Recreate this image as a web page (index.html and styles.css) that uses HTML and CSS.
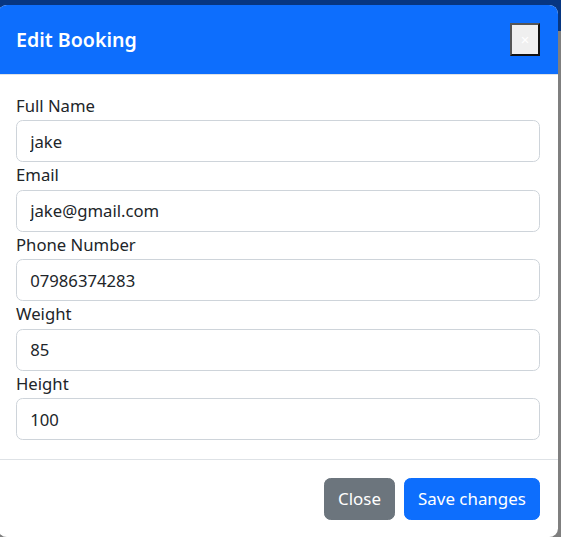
FILE: index.html
```html
<!DOCTYPE html>
<html lang="en">
<head>
<meta charset="utf-8">
<title>Edit Booking</title>
<link rel="stylesheet" href="styles.css">
</head>
<body>
<div class="modal">
  <div class="modal-header">
    <h5 class="modal-title">Edit Booking</h5>
    <button class="close-btn" type="button">×</button>
  </div>
  <form class="modal-body">
    <label class="field-label" for="name">Full Name</label>
    <input class="field-input" id="name" type="text" value="jake">
    <label class="field-label" for="email">Email</label>
    <input class="field-input" id="email" type="email" value="jake@gmail.com">
    <label class="field-label" for="phone">Phone Number</label>
    <input class="field-input" id="phone" type="text" value="07986374283">
    <label class="field-label" for="weight">Weight</label>
    <input class="field-input" id="weight" type="text" value="85">
    <label class="field-label" for="height">Height</label>
    <input class="field-input" id="height" type="text" value="100">
  </form>
  <div class="modal-footer">
    <button class="btn btn-secondary" type="button">Close</button>
    <button class="btn btn-primary" type="button">Save changes</button>
  </div>
</div>
</body>
</html>
```
FILE: styles.css
```css
html, body {
  margin: 0;
  padding: 0;
}
body {
  height: 537px;
  overflow: hidden;
  background: linear-gradient(to bottom, #073681 0, #073681 31px, #7f7f7f 31px);
  padding-top: 5px;
  box-sizing: border-box;
  font-family: "Noto Sans", "Open Sans", sans-serif;
  color: #212529;
}
.modal {
  width: 559.2px;
  margin-left: -1.6px;
  background: #fff;
  border-radius: 8.8px;
  overflow: hidden;
  border: 0;
}
.modal-header {
  display: flex;
  justify-content: space-between;
  align-items: flex-start;
  padding: 18px 17.6px 17.6px;
  background: #0d6efd;
  border-bottom: 1px solid #dee2e6;
}
.modal-title {
  margin: 0;
  font-size: 19.6px;
  font-weight: 600;
  line-height: 33px;
  color: #fff;
}
.close-btn {
  width: 30px;
  height: 33px;
  padding: 0;
  background: #efefef;
  color: #fff;
  font-family: "Liberation Sans", Arial, sans-serif;
  font-size: 14.7px;
  border-style: solid;
  border-width: 2px;
  border-color: #555 #111 #111 #555;
  border-radius: 0;
}
.modal-body {
  display: flex;
  flex-direction: column;
  padding: 18px 17.6px 19px;
  border-bottom: 1px solid #dee2e6;
}
.field-label {
  display: block;
  height: 27.5px;
  line-height: 26.4px;
  font-size: 16.7px;
}
.field-input {
  display: block;
  box-sizing: border-box;
  width: 100%;
  height: 42px;
  margin: 0;
  padding: 0 13.2px;
  font-family: inherit;
  font-size: 16.7px;
  color: #212529;
  border: 1px solid #ced4da;
  border-radius: 6.6px;
  background: #fff;
  outline: none;
}
.modal-footer {
  display: flex;
  justify-content: flex-end;
  gap: 8.8px;
  padding: 17.6px;
}
.btn {
  height: 42px;
  padding: 0 13.2px;
  font-family: inherit;
  font-size: 16.9px;
  color: #fff;
  border: 1px solid transparent;
  border-radius: 6.6px;
}
.btn-secondary {
  background: #6c757d;
  border-color: #6c757d;
}
.btn-primary {
  background: #0d6efd;
  border-color: #0d6efd;
}
```
